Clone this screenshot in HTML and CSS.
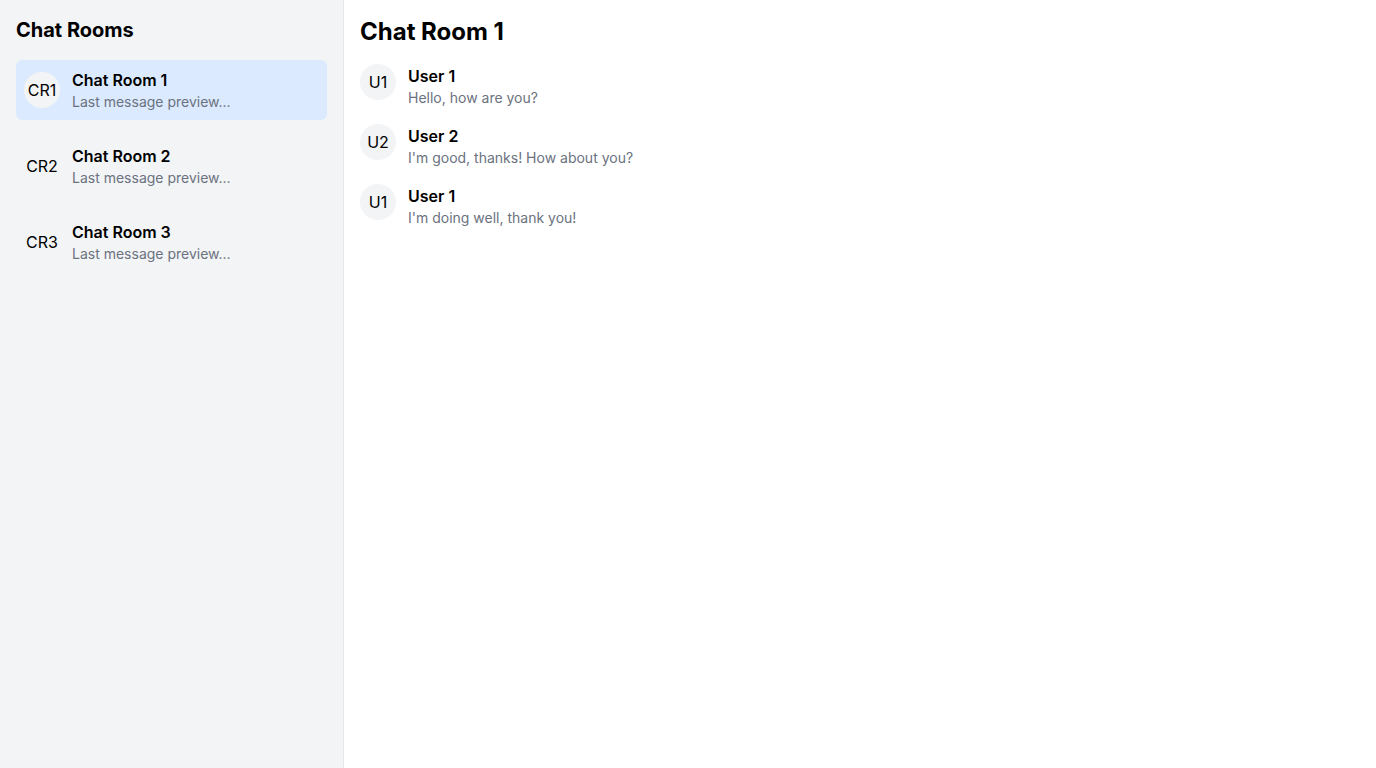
FILE: index.html
```html
<!DOCTYPE html>
<html>
<head>
<meta charset="utf-8">
<link rel="stylesheet" href="styles.css">
</head>
<body>
<div class="app">
  <aside class="sidebar">
    <h2 class="sidebar-title">Chat Rooms</h2>
    <ul class="rooms">
      <li class="room active">
        <span class="avatar">CR1</span>
        <div class="room-info">
          <div class="room-name">Chat Room 1</div>
          <div class="room-preview">Last message preview...</div>
        </div>
      </li>
      <li class="room">
        <span class="avatar">CR2</span>
        <div class="room-info">
          <div class="room-name">Chat Room 2</div>
          <div class="room-preview">Last message preview...</div>
        </div>
      </li>
      <li class="room">
        <span class="avatar">CR3</span>
        <div class="room-info">
          <div class="room-name">Chat Room 3</div>
          <div class="room-preview">Last message preview...</div>
        </div>
      </li>
    </ul>
  </aside>
  <main class="chat">
    <h1 class="chat-title">Chat Room 1</h1>
    <div class="messages">
      <div class="message">
        <span class="avatar">U1</span>
        <div>
          <div class="msg-user">User 1</div>
          <div class="msg-text">Hello, how are you?</div>
        </div>
      </div>
      <div class="message">
        <span class="avatar">U2</span>
        <div>
          <div class="msg-user">User 2</div>
          <div class="msg-text">I'm good, thanks! How about you?</div>
        </div>
      </div>
      <div class="message">
        <span class="avatar">U1</span>
        <div>
          <div class="msg-user">User 1</div>
          <div class="msg-text">I'm doing well, thank you!</div>
        </div>
      </div>
    </div>
  </main>
</div>
</body>
</html>
```
FILE: styles.css
```css
* { box-sizing: border-box; }
html, body { margin: 0; padding: 0; height: 100%; }
body {
  font-family: Inter, "Noto Sans", sans-serif;
  color: #000;
  background: #fff;
}
.app { display: flex; height: 100vh; }
.sidebar {
  width: 344px;
  flex-shrink: 0;
  background: #f3f4f6;
  border-right: 1px solid #e5e7eb;
  padding: 16px;
}
.sidebar-title {
  margin: 0 0 16px;
  font-size: 20px;
  line-height: 28px;
  font-weight: 700;
}
.rooms {
  list-style: none;
  margin: 0;
  padding: 0;
  display: flex;
  flex-direction: column;
  gap: 16px;
}
.room {
  display: flex;
  align-items: center;
  gap: 12px;
  padding: 8px;
  border-radius: 6px;
}
.room.active { background: #dbeafe; }
.avatar {
  width: 36px;
  height: 36px;
  border-radius: 50%;
  background: #f3f4f6;
  display: flex;
  align-items: center;
  justify-content: center;
  font-size: 16px;
  flex-shrink: 0;
}
.room-name, .msg-user {
  font-size: 16px;
  line-height: 24px;
  font-weight: 600;
}
.room-preview, .msg-text {
  font-size: 14px;
  line-height: 20px;
  color: #6b7280;
}
.chat { flex: 1; padding: 16px; }
.chat-title {
  margin: 0 0 16px;
  font-size: 24px;
  line-height: 32px;
  font-weight: 700;
}
.messages { display: flex; flex-direction: column; gap: 16px; }
.message { display: flex; align-items: flex-start; gap: 12px; }
```
